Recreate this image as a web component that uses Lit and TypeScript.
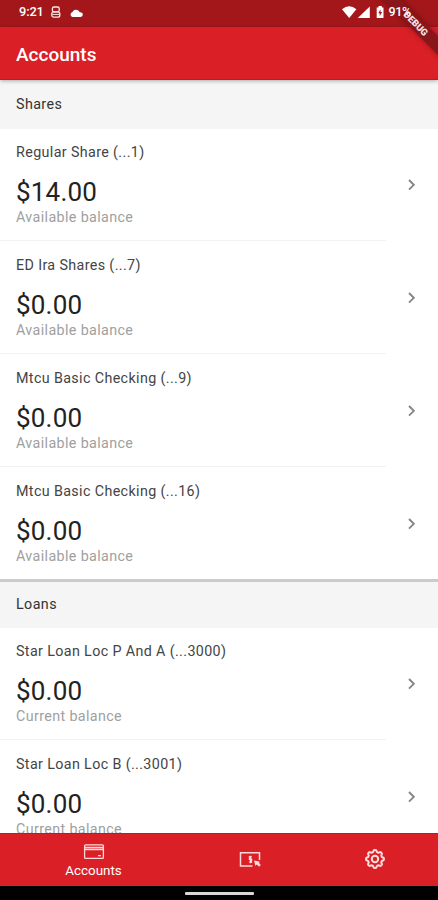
import { LitElement, html, css, svg } from "lit";
import { customElement, property } from "lit/decorators.js";

interface Account {
  name: string;
  amount: string;
  note: string;
}

const shares: Account[] = [
  { name: "Regular Share (...1)", amount: "$14.00", note: "Available balance" },
  { name: "ED Ira Shares (...7)", amount: "$0.00", note: "Available balance" },
  { name: "Mtcu Basic Checking (...9)", amount: "$0.00", note: "Available balance" },
  { name: "Mtcu Basic Checking (...16)", amount: "$0.00", note: "Available balance" },
];

const loans: Account[] = [
  { name: "Star Loan Loc P And A (...3000)", amount: "$0.00", note: "Current balance" },
  { name: "Star Loan Loc B (...3001)", amount: "$0.00", note: "Current balance" },
];

// Outline of an eight-lobed gear centred on 0,0.
const gearPath = (() => {
  const points: string[] = [];
  for (let i = 0; i <= 96; i++) {
    const a = (i / 96) * Math.PI * 2;
    const wave = Math.max(-1, Math.min(1, 1.7 * Math.cos(8 * a)));
    const r = 8 + 0.9 * wave;
    points.push(`${(r * Math.cos(a)).toFixed(2)} ${(r * Math.sin(a)).toFixed(2)}`);
  }
  return `M${points.join("L")}Z`;
})();

@customElement("account-row")
export class AccountRow extends LitElement {
  @property({ attribute: false }) account!: Account;

  static styles = css`
    :host {
      display: block;
      height: 113px;
      box-sizing: border-box;
      flex: none;
    }
    :host(.last) {
      height: 111px;
    }
    .row {
      height: 100%;
      display: flex;
      justify-content: space-between;
    }
    .info {
      width: 370px;
      padding: 13px 0 0 16px;
      height: 98px;
      border-bottom: 1px solid #f2f2f2;
    }
    :host(.last) .info {
      border-bottom-color: transparent;
    }
    .name {
      font-size: 14.3px;
      line-height: 20px;
      letter-spacing: 0.37px;
      color: #444;
    }
    .amount {
      margin-top: 14px;
      font-size: 26px;
      line-height: 32px;
      letter-spacing: 0.2px;
      color: #222;
    }
    .note {
      font-size: 14.3px;
      line-height: 18px;
      letter-spacing: 0.37px;
      color: #a0a0a0;
    }
    .chevron {
      width: 12px;
      height: 14px;
      margin: 49px 20px 0 0;
    }
  `;

  render() {
    const { name, amount, note } = this.account;
    return html`<div class="row">
      <div class="info">
        <div class="name">${name}</div>
        <div class="amount">${amount}</div>
        <div class="note">${note}</div>
      </div>
      <svg class="chevron" viewBox="0 0 12 14" fill="none" stroke="#858585" stroke-width="1.9">
        <path d="M3 2l4.800 4.800-4.800 4.800" />
      </svg>
    </div>`;
  }
}

@customElement("app-root")
export class AppRoot extends LitElement {
  static styles = css`
    :host {
      display: flex;
      flex-direction: column;
      position: relative;
      width: 438px;
      height: 900px;
      overflow: hidden;
      background: #a3171b;
      font-family: Roboto, sans-serif;
    }
    .status {
      flex: none;
      height: 27px;
      color: #fff;
      display: flex;
      align-items: center;
      padding: 0 27px 4px 19px;
      box-sizing: border-box;
      font-size: 12.8px;
      font-weight: 500;
      position: relative;
      z-index: 2;
    }
    .clock {
      width: 31px;
      letter-spacing: -0.1px;
    }
    .spacer {
      flex: 1;
    }
    .percent {
      margin-left: 2px;
      font-size: 12.5px;
      letter-spacing: -0.3px;
    }
    .bar {
      flex: none;
      height: 53px;
      box-sizing: border-box;
      padding: 2px 16px 0;
      display: flex;
      align-items: center;
      background: #da1f26;
      border-bottom: 1px solid #c9151c;
      color: #fff;
      font-size: 19px;
      font-weight: 500;
      box-shadow: 0 1px 4px rgba(0, 0, 0, 0.3);
      position: relative;
    }
    .list {
      flex: 1;
      min-height: 0;
      overflow: hidden;
      display: flex;
      flex-direction: column;
      background: #fff;
    }
    .heading {
      flex: none;
      height: 49px;
      box-sizing: border-box;
      padding-left: 16px;
      line-height: 48px;
      background: #f5f5f5;
      color: #333;
      font-size: 14.3px;
      letter-spacing: 0.4px;
    }
    .heading.second {
      border-top: 3px solid #cbcbcb;
      line-height: 44px;
    }
    .nav {
      flex: none;
      height: 53px;
      background: #da1f26;
      box-shadow: inset 0 1px #c9151c;
      color: #fff;
      display: flex;
      padding: 0 0 0 31px;
      box-sizing: border-box;
    }
    .tab {
      width: 125px;
      display: flex;
      flex-direction: column;
      align-items: center;
      justify-content: center;
      padding-bottom: 1px;
      box-sizing: border-box;
    }
    .tab.active {
      justify-content: flex-start;
      padding-top: 10px;
      margin-right: 31px;
    }
    .label {
      margin-top: 3px;
      font-size: 13.4px;
      line-height: 15px;
    }
    .system {
      flex: none;
      height: 14px;
      background: #000;
      display: flex;
      justify-content: center;
      padding-top: 6px;
      box-sizing: border-box;
    }
    .pill {
      width: 69px;
      height: 3px;
      border-radius: 1px;
      background: #d8d8d8;
    }
    .debug {
      position: absolute;
      top: 17px;
      left: 366px;
      width: 100px;
      height: 13px;
      transform: rotate(45deg);
      background: #88161b;
      box-shadow: 0 0 5px rgba(60, 0, 0, 0.45);
      color: #f7e4e4;
      font-size: 9.4px;
      font-weight: 900;
      line-height: 13px;
      text-align: center;
    }
  `;

  private rows(accounts: Account[]) {
    return accounts.map(
      (a, i) => html`<account-row class=${accounts === shares && i === accounts.length - 1 ? "last" : ""} .account=${a}></account-row>`
    );
  }

  render() {
    return html`
      <div class="status">
        <span class="clock">9:21</span>
        <svg width="34" height="14" viewBox="0 0 34 14">
          <g fill="none" stroke="#ffe6e6" stroke-width="1.3">
            <rect x="2.400" y="2" width="6.800" height="4.800" rx="1.600" />
            <rect x="1.800" y="6.800" width="8" height="5.400" rx="2" />
            <path d="M2.400 9.400h6.800" stroke-width="1" />
          </g>
          <path fill="#fff" d="M22.300 12a2.700 2.700 0 0 1 .1-5.100 4.100 4.100 0 0 1 7.400.3 2.500 2.500 0 0 1 3 2.400 2.400 2.400 0 0 1-2.300 2.400z" />
        </svg>
        <span class="spacer"></span>
        <svg width="44" height="14" viewBox="0 0 44 14" fill="#fff">
          <path d="M0 4.200Q7.200-1.600 14.400 4.200L7.200 13z" />
          <path d="M15.800 13L27.800 1.400V13z" />
          <path fill-rule="evenodd" d="M36.500 1h3.400v1.400h1.600V13h-6.800V2.400h1.800zM38.500 4.300l-2.200 4h1.400v2.900l2.400-4.100h-1.600z" />
        </svg>
        <span class="percent">91%</span>
      </div>
      <div class="bar">Accounts</div>
      <div class="list">
        <div class="heading">Shares</div>
        ${this.rows(shares)}
        <div class="heading second">Loans</div>
        ${this.rows(loans)}
      </div>
      <div class="nav">
        <div class="tab active">
          <svg width="22" height="17" viewBox="0 0 22 17" fill="none" stroke="#ffd9d9" stroke-width="1.3">
            <rect x="1.600" y="1.800" width="18.800" height="13.600" rx="1" />
            <path d="M1.600 4.500h18.800M1.600 6.500h18.800M15 12.700h3" />
          </svg>
          <span class="label">Accounts</span>
        </div>
        <div class="tab">
          <svg width="22" height="17" viewBox="0 0 22 17" fill="none" stroke="#ffdada" stroke-width="1.5">
            <path d="M13.500 15H1.500V1.800h19V9" />
            <path d="M12.700 5.800H10.500v2.500h2v2.800H10.100M11.500 4.700v7.500" stroke-width="1.400" />
            <path fill="#ffdada" stroke="none" d="M15 9.600l5.600 1-.5 1.400 1.700 2.100-1.800 1.700-2.200-2.200-1.500 1.200z" />
          </svg>
        </div>
        <div class="tab">
          <svg width="22" height="22" viewBox="-11 -11 22 22" fill="none" stroke="#ffdede" stroke-width="2">
            ${svg`<path d=${gearPath} stroke-linejoin="round" />`}
            <circle r="3.200" />
          </svg>
        </div>
      </div>
      <div class="system"><div class="pill"></div></div>
      <div class="debug">DEBUG</div>
    `;
  }
}
